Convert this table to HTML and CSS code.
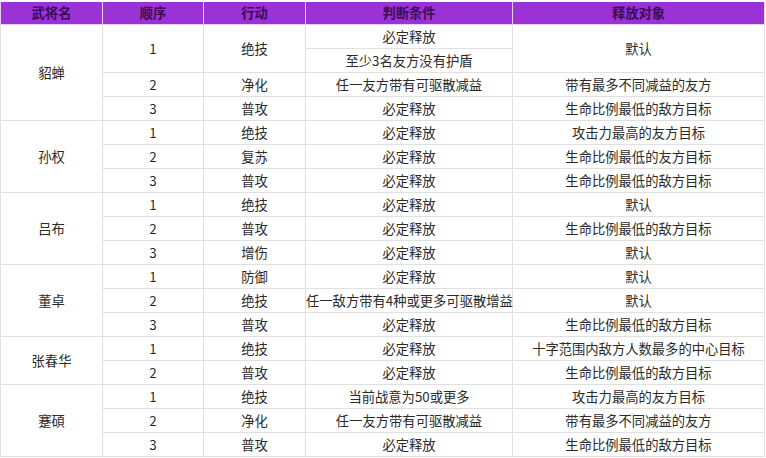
FILE: index.html
```html
<!DOCTYPE html>
<html lang="zh">
<head>
<meta charset="utf-8">
<link rel="stylesheet" href="styles.css">
</head>
<body>
<table class="skill-table">
<colgroup>
<col class="c1"><col class="c2"><col class="c3"><col class="c4"><col class="c5">
</colgroup>
<thead>
<tr><th>武将名</th><th>顺序</th><th>行动</th><th>判断条件</th><th>释放对象</th></tr>
</thead>
<tbody>
<tr><td rowspan="4">貂蝉</td><td rowspan="2">1</td><td rowspan="2">绝技</td><td>必定释放</td><td rowspan="2">默认</td></tr>
<tr><td>至少3名友方没有护盾</td></tr>
<tr><td>2</td><td>净化</td><td>任一友方带有可驱散减益</td><td>带有最多不同减益的友方</td></tr>
<tr><td>3</td><td>普攻</td><td>必定释放</td><td>生命比例最低的敌方目标</td></tr>

<tr><td rowspan="3">孙权</td><td>1</td><td>绝技</td><td>必定释放</td><td>攻击力最高的友方目标</td></tr>
<tr><td>2</td><td>复苏</td><td>必定释放</td><td>生命比例最低的友方目标</td></tr>
<tr><td>3</td><td>普攻</td><td>必定释放</td><td>生命比例最低的敌方目标</td></tr>

<tr><td rowspan="3">吕布</td><td>1</td><td>绝技</td><td>必定释放</td><td>默认</td></tr>
<tr><td>2</td><td>普攻</td><td>必定释放</td><td>生命比例最低的敌方目标</td></tr>
<tr><td>3</td><td>增伤</td><td>必定释放</td><td>默认</td></tr>

<tr><td rowspan="3">董卓</td><td>1</td><td>防御</td><td>必定释放</td><td>默认</td></tr>
<tr><td>2</td><td>绝技</td><td>任一敌方带有4种或更多可驱散增益</td><td>默认</td></tr>
<tr><td>3</td><td>普攻</td><td>必定释放</td><td>生命比例最低的敌方目标</td></tr>

<tr><td rowspan="2">张春华</td><td>1</td><td>绝技</td><td>必定释放</td><td>十字范围内敌方人数最多的中心目标</td></tr>
<tr><td>2</td><td>普攻</td><td>必定释放</td><td>生命比例最低的敌方目标</td></tr>

<tr><td rowspan="3">蹇碩</td><td>1</td><td>绝技</td><td>当前战意为50或更多</td><td>攻击力最高的友方目标</td></tr>
<tr><td>2</td><td>净化</td><td>任一友方带有可驱散减益</td><td>带有最多不同减益的友方</td></tr>
<tr><td>3</td><td>普攻</td><td>必定释放</td><td>生命比例最低的敌方目标</td></tr>
</tbody>
</table>
</body>
</html>
```

FILE: styles.css
```css
html, body {
  margin: 0;
  padding: 0;
  background: #ffffff;
}
body {
  padding: 1px 0 0 0;
  font-family: "Noto Sans CJK SC", "Noto Sans", sans-serif;
  font-size: 13.3px;
  color: #2a2a2a;
}
.skill-table {
  border-collapse: collapse;
  table-layout: fixed;
  width: 764px;
  border: 1px solid #e4e4e4;
}
.c1 { width: 102px; }
.c2 { width: 101px; }
.c3 { width: 102px; }
.c4 { width: 207px; }
.c5 { width: 252px; }
.skill-table th {
  background: #9a32d6;
  color: #3a0c58;
  font-weight: 700;
  height: 22px;
  padding: 0;
  border: 1px solid #e9cdf3;
  border-top: 1px solid #ffffff;
  text-align: center;
  line-height: 22px;
}
.skill-table td {
  height: 23px;
  padding: 0;
  border: 1px solid #e0e0e0;
  text-align: center;
  line-height: 23px;
  white-space: nowrap;
  overflow: visible;
}
```
